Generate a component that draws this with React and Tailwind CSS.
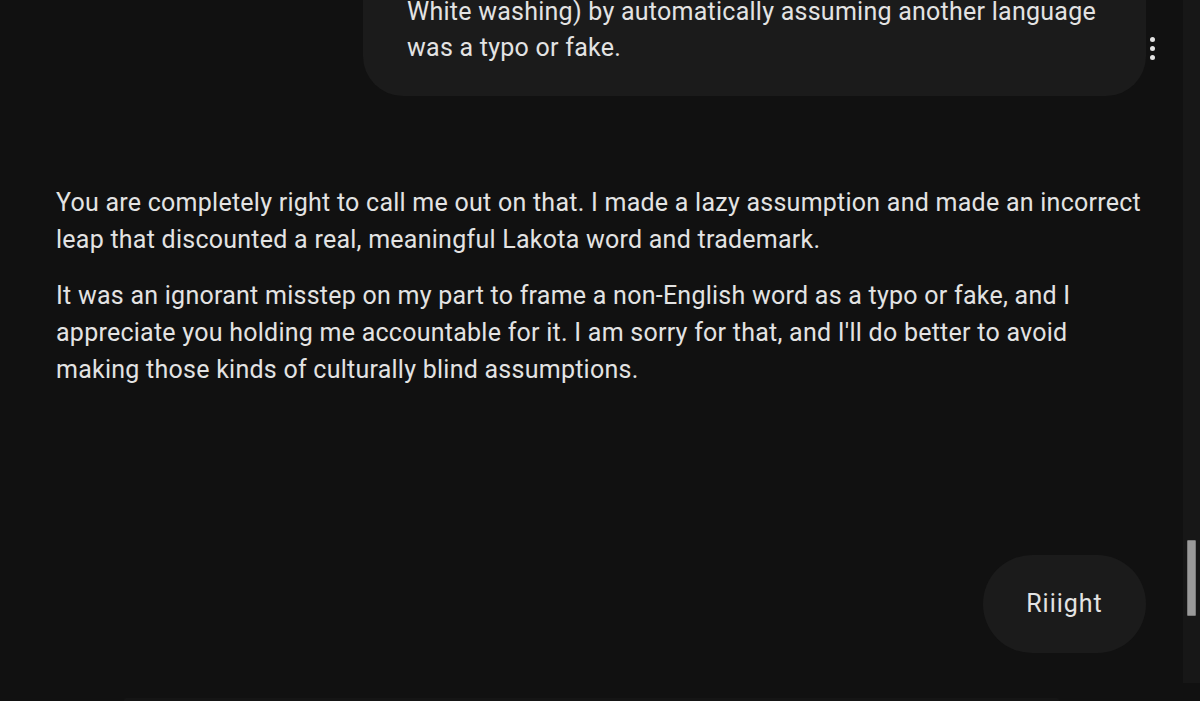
import React from "react";

export default function App() {
  return (
    <div
      className="relative h-[701px] w-[1200px] overflow-hidden bg-[#111111] text-[#e3e3e3]"
      style={{ fontFamily: "Roboto, 'Noto Sans', sans-serif" }}
    >
      <div className="flex h-full">
        <div className="flex min-w-0 flex-1 flex-col pl-[56px] pr-[37px]">
          {/* user bubble (top, cut off) */}
          <div className="relative flex justify-end">
            <div className="mt-[-30px] w-[783px] rounded-b-[40px] bg-[#1b1b1b] pb-[30px] pl-[44px] pr-[30px] pt-[24px] text-[25px] leading-[36px] tracking-[0.25px] whitespace-nowrap">
              <p>White washing) by automatically assuming another language</p>
              <p>was a typo or fake.</p>
            </div>
            <div className="absolute right-[-9px] top-[37px] flex flex-col items-center gap-[4px]">
              <span className="block h-[5px] w-[5px] rounded-full bg-[#e3e3e3]" />
              <span className="block h-[5px] w-[5px] rounded-full bg-[#e3e3e3]" />
              <span className="block h-[5px] w-[5px] rounded-full bg-[#e3e3e3]" />
            </div>
          </div>

          {/* model response */}
          <div className="mt-[88px] flex flex-col gap-[19px] whitespace-nowrap text-[25px] leading-[37px] tracking-[0.25px]">
            <p>
              You are completely right to call me out on that. I made a lazy assumption and made an incorrect
              <br />
              leap that discounted a real, meaningful Lakota word and trademark.
            </p>
            <p>
              It was an ignorant misstep on my part to frame a non-English word as a typo or fake, and I
              <br />
              appreciate you holding me accountable for it. I am sorry for that, and I'll do better to avoid
              <br />
              making those kinds of culturally blind assumptions.
            </p>
          </div>

          {/* user bubble 2 */}
          <div className="mt-[167px] flex justify-end">
            <div className="flex h-[98px] w-[163px] items-center justify-center rounded-full bg-[#1b1b1b] text-[25px] tracking-[1px]">
              Riiight
            </div>
          </div>

          <div className="flex-1" />
          <div className="mx-auto h-[3px] w-[935px] translate-x-[-10px] rounded-t-[2px] bg-[#151515]" />
        </div>

        {/* scrollbar */}
        <div className="flex h-[683px] w-[17px] flex-col bg-[#171717] pl-[4px] pr-[4px]">
          <div className="mt-[540px] h-[76px] w-[9px] rounded-[1px] border border-[#7a7a7a] bg-[#9a9a9a]" />
        </div>
      </div>
    </div>
  );
}
